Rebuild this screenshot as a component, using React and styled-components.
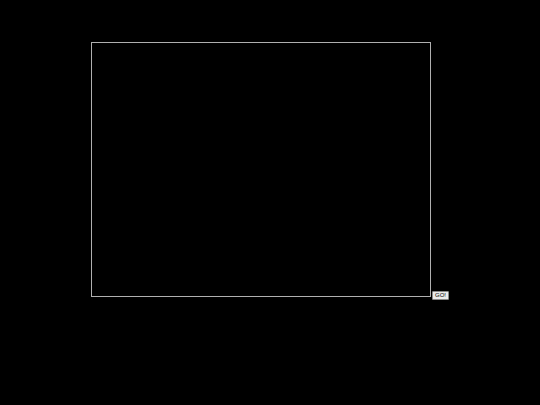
import styled, { createGlobalStyle } from "styled-components";

const Global = createGlobalStyle`
  html, body {
    margin: 0;
    background: #000;
    height: 100%;
  }
  #root {
    height: 100%;
  }
`;

const Page = styled.div`
  display: flex;
  justify-content: center;
  align-items: flex-end;
  padding-top: 42px;
  font-family: "Liberation Sans", Arial, sans-serif;
`;

const Canvas = styled.div`
  width: 338px;
  height: 253px;
  border: 1px solid #b0b0b0;
  background: #000;
`;

const GoButton = styled.button`
  margin: 0 0 -3px 1px;
  padding: 0 2px;
  height: 9px;
  border: 1px solid #8a8a8a;
  border-radius: 1px;
  background: #ececec;
  color: #000;
  font-family: "Liberation Sans", Arial, sans-serif;
  font-size: 6px;
  line-height: 7px;
  cursor: pointer;
`;

export default function App() {
  return (
    <>
      <Global />
      <Page>
        <Canvas />
        <GoButton>GO!</GoButton>
      </Page>
    </>
  );
}
